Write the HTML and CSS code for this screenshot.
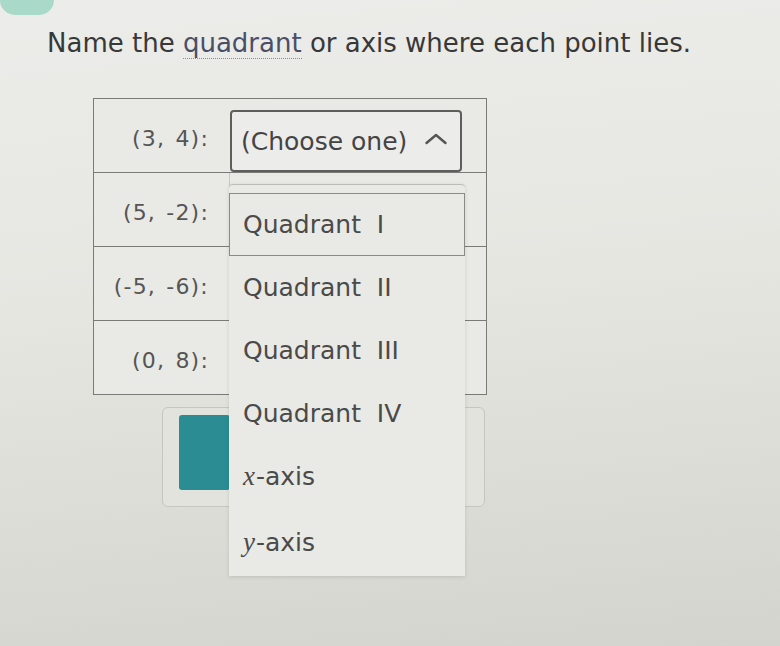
FILE: index.html
```html
<!DOCTYPE html>
<html>
<head>
<meta charset="utf-8">
<link rel="stylesheet" href="styles.css">
</head>
<body>
<div class="page">
  <div class="tab"></div>
  <h1 class="prompt">Name the <span class="term">quadrant</span> or axis where each point lies.</h1>
  <div class="work">
    <div class="grid">
      <div class="row">
        <div class="label">(3, 4):</div>
        <div class="cell first">
          <div class="select">
            <span>(Choose one)</span>
            <svg class="caret" width="24" height="14" viewBox="0 0 24 14"><path d="M2.5 11 L12 3 L21.5 11" fill="none" stroke="#555" stroke-width="2.4" stroke-linecap="round" stroke-linejoin="round"/></svg>
          </div>
        </div>
      </div>
      <div class="row">
        <div class="label">(5, -2):</div>
        <div class="cell"></div>
      </div>
      <div class="row">
        <div class="label">(-5, -6):</div>
        <div class="cell"></div>
      </div>
      <div class="row">
        <div class="label">(0, 8):</div>
        <div class="cell"></div>
      </div>
    </div>
    <div class="buttons">
      <div class="btn-teal"></div>
    </div>
    <ul class="menu">
      <li class="opt active">Quadrant&nbsp; I</li>
      <li class="opt">Quadrant&nbsp; II</li>
      <li class="opt">Quadrant&nbsp; III</li>
      <li class="opt">Quadrant&nbsp; IV</li>
      <li class="opt"><i>x</i>-axis</li>
      <li class="opt last"><i>y</i>-axis</li>
    </ul>
  </div>
</div>
</body>
</html>
```
FILE: styles.css
```css
html, body {
  margin: 0;
  padding: 0;
}
body {
  width: 780px;
  height: 646px;
  overflow: hidden;
  background: linear-gradient(175deg, #ececea 0%, #e6e6e1 45%, #d4d4ce 100%);
  font-family: "DejaVu Sans", Verdana, sans-serif;
  color: #3d3d3d;
}
.page {
  position: relative;
  height: 646px;
}
.tab {
  width: 54px;
  height: 15px;
  background: #a9d9c9;
  border-radius: 0 0 18px 18px;
}
.prompt {
  margin: 13px 0 0 47px;
  font-size: 26px;
  font-weight: normal;
  line-height: 30px;
  color: #383838;
  white-space: nowrap;
}
.term {
  color: #4a4f66;
  border-bottom: 1px dotted #8a8fa0;
}
.work {
  position: relative;
  margin-top: 40px;
}
.grid {
  margin-left: 93px;
  width: 392px;
  border: 1px solid #7a7a76;
  background: #e9e9e5;
}
.row {
  display: flex;
  height: 73px;
  border-top: 1px solid #7a7a76;
}
.row:first-child {
  border-top: none;
}
.label {
  width: 115px;
  padding-right: 20px;
  padding-top: 6px;
  display: flex;
  align-items: center;
  justify-content: flex-end;
  font-size: 22px;
  color: #555;
  letter-spacing: 1.2px;
  word-spacing: 2px;
}
.cell {
  flex: 1;
  border-left: 1px solid #c8c8c3;
}
.cell.first {
  border-left: none;
  display: flex;
  align-items: flex-end;
  padding-left: 1px;
}
.select {
  width: 232px;
  height: 62px;
  border: 2px solid #5e5e5c;
  border-radius: 4px;
  background: #ececea;
  display: flex;
  align-items: center;
  padding-left: 9px;
  box-sizing: border-box;
  font-size: 25px;
  color: #444;
  gap: 17px;
}
.caret {
  margin-top: -4px;
}
.buttons {
  margin: 12px 0 0 162px;
  width: 323px;
  height: 100px;
  border: 1px solid #c6c6c1;
  border-radius: 6px;
  box-sizing: border-box;
  padding: 7px 0 0 16px;
  background: #e3e3de;
}
.btn-teal {
  width: 51px;
  height: 75px;
  border-radius: 3px;
  background: #2b8d93;
}
.menu {
  position: absolute;
  left: 229px;
  top: 86px;
  width: 236px;
  margin: 0;
  padding: 8px 0 4px;
  list-style: none;
  background: #e9e9e5;
  border-radius: 4px 4px 0 0;
  border-top: 1px solid #bdbdb8;
  box-shadow: 0 1px 4px rgba(0,0,0,0.12);
  box-sizing: border-box;
}
.opt {
  height: 63px;
  display: flex;
  align-items: center;
  padding-left: 14px;
  font-size: 25px;
  color: #4a4a4a;
  box-sizing: border-box;
}
.opt.active {
  border: 1px solid #8a8a86;
  padding-left: 13px;
}
.opt.last {
  height: 64px;
  padding-top: 4px;
}
.opt i {
  font-style: italic;
  font-family: "Liberation Serif", serif;
  font-size: 27px;
  margin-right: 1px;
}
```
